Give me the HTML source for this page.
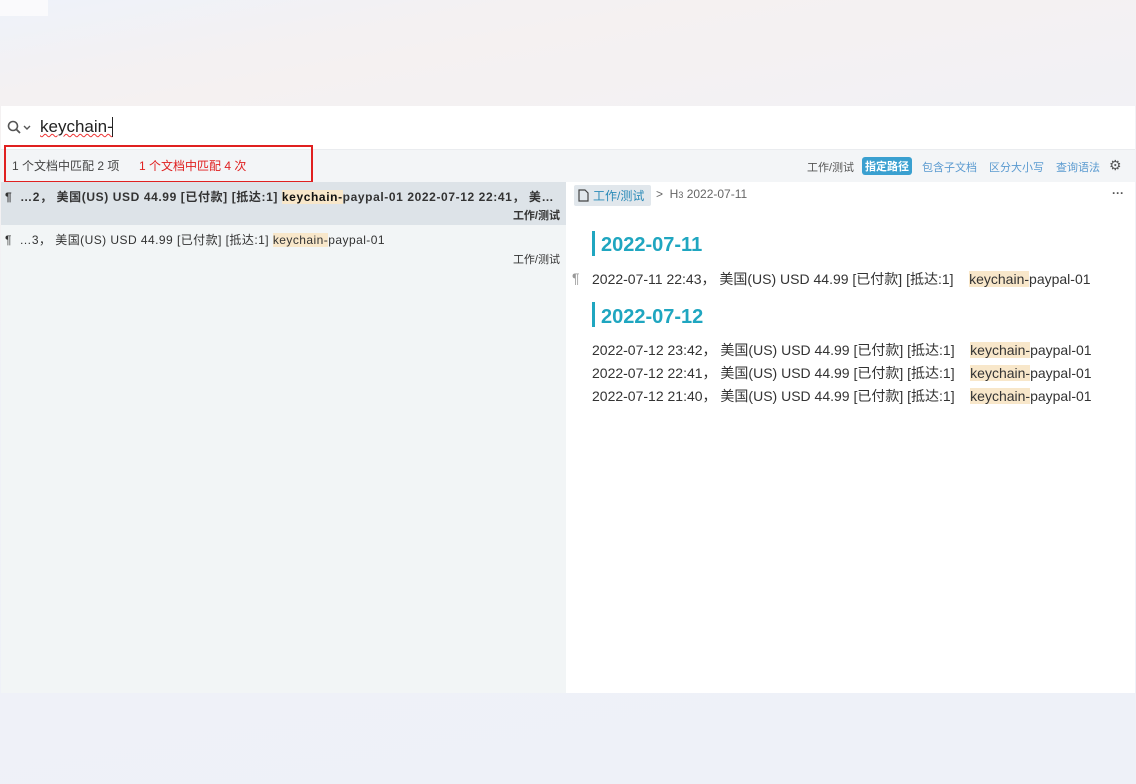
<!DOCTYPE html>
<html><head><meta charset="utf-8"><style>
*{margin:0;padding:0;box-sizing:border-box}
body{width:1136px;height:784px;overflow:hidden;background:linear-gradient(170deg,#eef2fa 0%,#f3f1f3 8%,#f5f1f1 13%,#f0f1f7 40%,#eef1f8 100%);font-family:"Liberation Sans","Noto Sans CJK SC",sans-serif;position:relative;color:#333}
.abs{position:absolute}
.hl{background:#f8e7ca}
</style></head><body>
<div class="abs" style="left:0;top:0;width:48px;height:16px;background:#fafafc"></div>
<div class="abs" style="left:1px;top:106px;width:1134px;height:587px;background:#fff">
  <div class="abs" style="left:0;top:0;width:1134px;height:43px;background:#fff">
    <svg class="abs" style="left:6px;top:14px" width="30" height="16" viewBox="0 0 30 16"><circle cx="6" cy="6" r="4.5" fill="none" stroke="#555" stroke-width="1.6"/><path d="M9.5 9.5 L13 13" stroke="#555" stroke-width="1.8"/><path d="M17 6 L20 9 L23 6" fill="none" stroke="#555" stroke-width="1.4"/></svg>
    <div class="abs" style="left:39px;top:11px;font-size:17px;color:#222;text-decoration:underline wavy #e33;text-decoration-thickness:1px">keychain-</div>
    <div class="abs" style="left:111px;top:11px;width:1px;height:20px;background:#222"></div>
  </div>
  <div class="abs" style="left:0;top:43px;width:1134px;height:33px;background:#f3f5f7;border-top:1px solid #eaecef"></div>
  <div class="abs" style="left:3px;top:39px;width:309px;height:38px;border:2px solid #e02020"></div>
  <div class="abs" style="left:11px;top:51px;font-size:12px;color:#444">1 个文档中匹配 2 项</div>
  <div class="abs" style="left:138px;top:51px;font-size:12px;color:#e02020">1 个文档中匹配 4 次</div>
  <div class="abs" style="left:806px;top:53px;font-size:11px;color:#555">工作/测试</div>
  <div class="abs" style="left:861px;top:51px;font-size:11px;color:#fff;background:#3aa0d0;border-radius:3px;padding:1px 3px;font-weight:bold">指定路径</div>
  <div class="abs" style="left:921px;top:53px;font-size:11px;color:#5a9ad0">包含子文档</div>
  <div class="abs" style="left:988px;top:53px;font-size:11px;color:#5a9ad0">区分大小写</div>
  <div class="abs" style="left:1055px;top:53px;font-size:11px;color:#5a9ad0">查询语法</div>
  <div class="abs" style="left:1108px;top:51px;font-size:14px;color:#555">⚙</div>
  <div class="abs" style="left:0;top:76px;width:565px;height:511px;background:#f2f5f6">
    <div class="abs" style="left:0;top:0;width:565px;height:43px;background:#dde3e8"></div>
    <div class="abs" style="left:4px;top:6px;font-size:12px;color:#333;font-weight:bold;white-space:nowrap;letter-spacing:0.6px">¶ &nbsp;…2， 美国(US) USD 44.99 [已付款] [抵达:1] <span class="hl" style="color:#111">keychain-</span>paypal-01 2022-07-12 22:41， 美…</div>
    <div class="abs" style="right:6px;top:25px;font-size:11px;color:#333;font-weight:bold">工作/测试</div>
    <div class="abs" style="left:4px;top:49px;font-size:12px;color:#333;white-space:nowrap;letter-spacing:0.45px">¶ &nbsp;…3， 美国(US) USD 44.99 [已付款] [抵达:1] <span class="hl">keychain-</span>paypal-01</div>
    <div class="abs" style="right:6px;top:69px;font-size:11px;color:#333">工作/测试</div>
  </div>
  <div class="abs" style="left:573px;top:79px;background:#e1e7ec;height:21px;width:77px;border-radius:2px"></div>
  <svg class="abs" style="left:577px;top:83px" width="11" height="13" viewBox="0 0 11 13"><path d="M1 1 H7 L10 4 V12 H1 Z" fill="none" stroke="#444" stroke-width="1.2"/></svg>
  <div class="abs" style="left:592px;top:81px;font-size:12px;color:#2a8ab8">工作/测试</div>
  <div class="abs" style="left:655px;top:81px;font-size:12px;color:#666">&gt; &nbsp;H<span style="font-size:9px">3</span> 2022-07-11</div>
  <div class="abs" style="left:1111px;top:80px;font-size:12px;color:#555;font-weight:bold">···</div>
  <div class="abs" style="left:591px;top:125px;width:3px;height:25px;background:#1fa6c0"></div>
  <div class="abs" style="left:600px;top:128px;font-size:20px;color:#1fa6c0;font-weight:bold">2022-07-11</div>
  <div class="abs" style="left:571px;top:164px;font-size:14px;color:#999">¶</div>
  <div class="abs" style="left:591px;top:163px;font-size:14px;color:#333;white-space:nowrap">2022-07-11 22:43， 美国(US) USD 44.99 [已付款] [抵达:1] &nbsp;&nbsp;&nbsp;<span class="hl">keychain-</span>paypal-01</div>
  <div class="abs" style="left:591px;top:196px;width:3px;height:25px;background:#1fa6c0"></div>
  <div class="abs" style="left:600px;top:200px;font-size:20px;color:#1fa6c0;font-weight:bold">2022-07-12</div>
  <div class="abs" style="left:591px;top:233px;font-size:14px;color:#333;white-space:nowrap;line-height:23px">2022-07-12 23:42， 美国(US) USD 44.99 [已付款] [抵达:1] &nbsp;&nbsp;&nbsp;<span class="hl">keychain-</span>paypal-01<br>2022-07-12 22:41， 美国(US) USD 44.99 [已付款] [抵达:1] &nbsp;&nbsp;&nbsp;<span class="hl">keychain-</span>paypal-01<br>2022-07-12 21:40， 美国(US) USD 44.99 [已付款] [抵达:1] &nbsp;&nbsp;&nbsp;<span class="hl">keychain-</span>paypal-01</div>
</div>
</body></html>
